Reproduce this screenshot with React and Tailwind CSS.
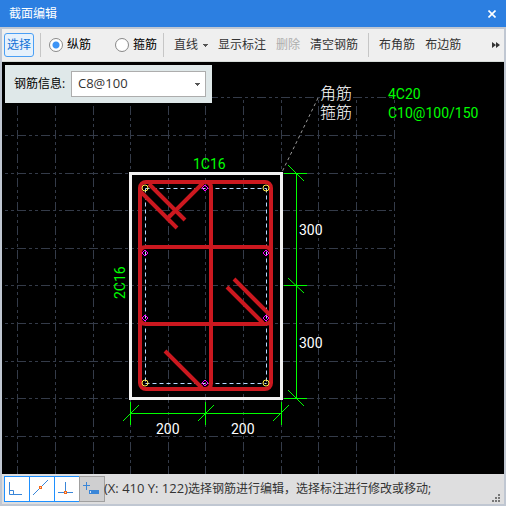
import { useState } from 'react';

const columns = [17, 55, 93, 130, 168, 205, 243, 281, 318, 356, 394];
const rows = [97, 135, 173, 210, 248, 285, 323, 361, 398, 436];

const cornerBars = [[145, 188], [266, 188], [145, 383], [266, 383]];
const sideBars = [[205, 188], [145, 253], [266, 253], [145, 318], [266, 318], [205, 383]];

const Separator = () => <span className="h-6 w-px shrink-0 bg-[#c6c6c6]" />;

const Caret = ({ className }) => (
    <svg viewBox="0 0 5 3" className={`h-[3px] w-[5px] ${className ?? ''}`} fill="#555" shapeRendering="crispEdges">
        <path d="M0 0h5v1H4v1H3v1H2V2H1V1H0z" />
    </svg>
);

const BarType = ({ value, label, current, onChange }) => (
    <label className="flex shrink-0 items-center gap-1 text-black">
        <input
            type="radio"
            name="barType"
            checked={current === value}
            onChange={() => onChange(value)}
            className="size-3.5 appearance-none rounded-full border border-[#8a8a8a] bg-white bg-clip-padding checked:bg-[radial-gradient(circle,#3d94f6_0_3px,white_4px)]"
        />
        {label}
    </label>
);

const SectionDrawing = () => (
    <svg viewBox="2 62 502 412" className="block h-auto w-full">
        {/* Grid */}
        <g stroke="#343b49" strokeDasharray="9 3 3 3 3 3" shapeRendering="crispEdges">
            {columns.map((x) => <path key={x} d={`M${x + 0.5} 475V97`} />)}
            {rows.map((y) => <path key={y} d={`M394 ${y + 0.5}H2`} strokeDashoffset="16" />)}
        </g>

        {/* Leader to the corner bar notes */}
        <path d="M318 98L282 172" stroke="#999" strokeDasharray="3 3" />

        {/* Concrete outline and cover line */}
        <path d="M130.5 173.5H281.5V398.5H130.5z" fill="none" stroke="#f2f2f2" strokeWidth="3" />
        <path
            d="M145.5 188.5H266.5M145.5 383.5H266.5M145.5 188.5V383.5M266.5 188.5V383.5"
            fill="none"
            stroke="#b8d8ff"
            strokeDasharray="4 3"
        />

        {/* Stirrups */}
        <g fill="none" stroke="#cb181f" strokeWidth="4">
            <rect x="140" y="182" width="131" height="207" rx="6" />
            <path d="M205 182Q211 182 211 188V383Q211 389 205 389" />
            <path d="M140 253Q140 247 146 247H265Q271 247 271 253" />
            <path d="M140 318Q140 324 146 324H265Q271 324 271 318" />
            <path d="M141 192L177 228M149 184L185 220M203 183L166 220" />
            <path d="M227 287L263 323M234 279L271 316M165 351L202 388" />
        </g>

        {/* Bars */}
        <g fill="none" stroke="#ffe94a">
            {cornerBars.map(([x, y]) => <circle key={`${x}-${y}`} cx={x} cy={y} r="3" />)}
        </g>
        <g fill="none" stroke="#ff00ff">
            {sideBars.map(([x, y]) => (
                <path key={`${x}-${y}`} d={`M${x - 3} ${y}l3 -3l3 3l-3 3z`} />
            ))}
        </g>

        {/* Dimensions */}
        <g fill="none" stroke="#00ff00">
            <path d="M296.5 173V399M284 173.5H307M284 285.5H307M284 398.5H307" />
            <path d="M130 413.5H282M130.5 402V425M205.5 402V425M281.5 402V425" />
            <path d="M288 165L304 181M288 278L304 293M288 390L304 406M123 421L139 405M198 421L214 405M273 421L289 405" />
        </g>
        <g className="font-['Roboto','Noto_Sans_CJK_SC',sans-serif] text-[14px]">
            <g fill="#fff">
                <text x="299" y="235">300</text>
                <text x="299" y="348">300</text>
                <text x="156" y="434">200</text>
                <text x="231" y="434">200</text>
                <text x="320" y="99" className="text-[16px] font-light">角筋</text>
                <text x="320" y="118" className="text-[16px] font-light">箍筋</text>
            </g>
            <g fill="#00ff00">
                <text x="193" y="169">1C16</text>
                <text transform="translate(125 299) rotate(-90)">2C16</text>
                <text x="388" y="99">4C20</text>
                <text x="388" y="118">C10@100/150</text>
            </g>
        </g>
    </svg>
);

const snapModes = [
    {
        label: '正交',
        icon: (
            <>
                <path d="M4.5 5V17.5H17" stroke="#3a86d8" />
                <path d="M4.5 13.5H8.5V17.5" stroke="#3a86d8" />
            </>
        ),
    },
    {
        label: '中点',
        icon: (
            <>
                <path d="M3 18L18 3" stroke="#3a86d8" />
                <rect x="9.5" y="9.5" width="2" height="2" fill="#ffd9c2" stroke="#f26a1b" />
            </>
        ),
    },
    {
        label: '垂点',
        icon: (
            <>
                <path d="M10.5 5V15.5M3 15.5H18" stroke="#3a86d8" />
                <rect x="9.5" y="14.5" width="2" height="2" fill="#ffd9c2" stroke="#f26a1b" />
            </>
        ),
    },
];

const App = () => {
    const [barType, setBarType] = useState('long');

    return (
        <div className="border-x-2 border-b-2 border-[#c0c7d2] bg-[#dededf] font-['Open_Sans','Noto_Sans_CJK_SC',sans-serif] text-xs text-[#333]">
            {/* Title bar */}
            <header className="-mx-0.5 flex h-[27px] items-center justify-between bg-[#2c7fe1] pr-2.5 pl-[9px] text-white">
                <h1>截面编辑</h1>
                <button type="button" aria-label="关闭">
                    <svg viewBox="0 0 8 8" className="size-2" stroke="#fff" strokeWidth="1.6">
                        <path d="M0.5 0.5L7.5 7.5M7.5 0.5L0.5 7.5" />
                    </svg>
                </button>
            </header>

            {/* Toolbar */}
            <div className="flex h-[35px] items-center border-t-2 border-b border-t-[#c0c7d2] border-b-[#d5dbd8] bg-[#efefef] pr-1 pl-0.5 whitespace-nowrap">
                <button type="button" className="mr-1.5 h-6 shrink-0 rounded-[3px] border border-[#4a9ff5] bg-[#e6f1fc] px-0.5 text-[#1273d6]">
                    选择
                </button>
                <Separator />
                <div className="mr-1.5 ml-2 flex gap-6">
                    <BarType value="long" label="纵筋" current={barType} onChange={setBarType} />
                    <BarType value="stirrup" label="箍筋" current={barType} onChange={setBarType} />
                </div>
                <Separator />
                <div className="mx-2.5 flex gap-2.5">
                    <button type="button" className="flex items-center gap-[5px]">
                        直线 <Caret />
                    </button>
                    <button type="button">显示标注</button>
                    <button type="button" disabled className="text-[#adadad]">删除</button>
                    <button type="button">清空钢筋</button>
                </div>
                <Separator />
                <div className="ml-2.5 flex gap-2.5">
                    <button type="button">布角筋</button>
                    <button type="button">布边筋</button>
                </div>
                <button type="button" aria-label="更多" className="ml-auto">
                    <svg viewBox="0 0 8 6" className="h-1.5 w-2" fill="#333">
                        <path d="M0 0L4 3L0 6zM4 0L8 3L4 6z" />
                    </svg>
                </button>
            </div>

            {/* Canvas */}
            <main className="relative bg-black">
                <SectionDrawing />
                <div className="absolute top-[3px] left-[3px] flex items-center bg-[#dfe8e9] py-1.5 pr-1.5 pl-[9px]">
                    <label htmlFor="barInfo" className="w-[57px] whitespace-nowrap text-black">钢筋信息:</label>
                    <div className="relative flex items-center">
                        <select id="barInfo" className="h-[26px] w-[135px] appearance-none border border-[#adadad] bg-white px-1.5 text-[13px]">
                            <option>C8@100</option>
                        </select>
                        <Caret className="pointer-events-none absolute right-1.5" />
                    </div>
                </div>
            </main>

            {/* Status bar */}
            <footer className="flex h-[30px] items-center pr-1 pl-0.5 whitespace-nowrap">
                {snapModes.map((mode) => (
                    <button key={mode.label} type="button" aria-label={mode.label} className="-mr-px size-[26px] shrink-0 border border-[#1e90ff] bg-white">
                        <svg viewBox="0 0 24 24" className="size-6" fill="none">{mode.icon}</svg>
                    </button>
                ))}
                <button type="button" aria-label="动态输入" className="-mr-px size-[26px] shrink-0 border border-[#a0a0a0] bg-[#cfcfd0]">
                    <svg viewBox="0 0 24 24" className="size-6" fill="none">
                        <path d="M6.5 5V13M3 8.5H10" stroke="#3a86d8" />
                        <rect x="9" y="13" width="10" height="4" fill="#3a86d8" />
                        <path d="M10.5 14V16" stroke="#cfe2f8" />
                    </svg>
                </button>
                <p><span className="text-[13px]">(X: 410 Y: 122)</span>选择钢筋进行编辑，选择标注进行修改或移动;</p>
                <svg viewBox="0 0 8 8" className="mb-0.5 ml-auto size-2 self-end" fill="#777" shapeRendering="crispEdges">
                    <path d="M6 0h2v2h-2zM3 3h2v2h-2zM6 3h2v2h-2zM0 6h2v2h-2zM3 6h2v2h-2zM6 6h2v2h-2z" />
                </svg>
            </footer>
        </div>
    );
};

export default App;
